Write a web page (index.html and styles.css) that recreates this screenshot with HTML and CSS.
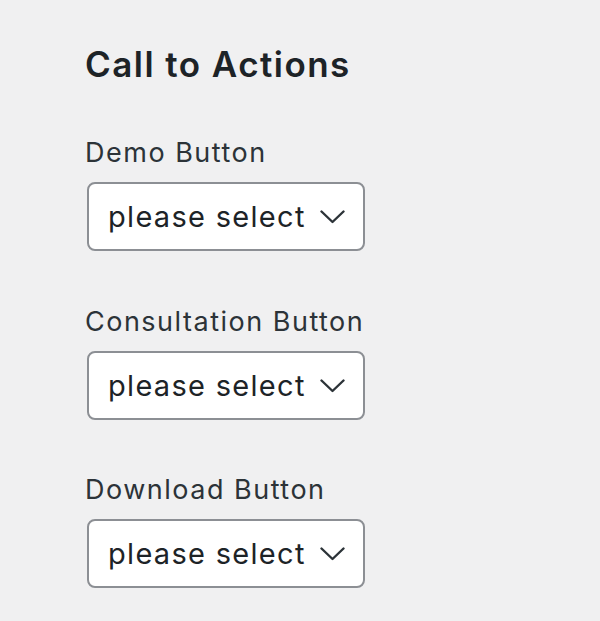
FILE: index.html
```html
<!DOCTYPE html>
<html>
<head>
<meta charset="utf-8">
<link rel="stylesheet" href="styles.css">
</head>
<body>
<div class="panel">
  <h2 class="title">Call to Actions</h2>
  <div class="field">
    <label class="label">Demo Button</label>
    <div class="select-wrap">
      <select class="select"><option>please select</option></select>
      <svg class="chev" width="25" height="14" viewBox="0 0 25 14"><path d="M1.5 1.5 L12.5 12 L23.5 1.5" fill="none" stroke="#2c3338" stroke-width="2.4" stroke-linecap="round" stroke-linejoin="round"/></svg>
    </div>
  </div>
  <div class="field">
    <label class="label">Consultation Button</label>
    <div class="select-wrap">
      <select class="select"><option>please select</option></select>
      <svg class="chev" width="25" height="14" viewBox="0 0 25 14"><path d="M1.5 1.5 L12.5 12 L23.5 1.5" fill="none" stroke="#2c3338" stroke-width="2.4" stroke-linecap="round" stroke-linejoin="round"/></svg>
    </div>
  </div>
  <div class="field">
    <label class="label">Download Button</label>
    <div class="select-wrap">
      <select class="select"><option>please select</option></select>
      <svg class="chev" width="25" height="14" viewBox="0 0 25 14"><path d="M1.5 1.5 L12.5 12 L23.5 1.5" fill="none" stroke="#2c3338" stroke-width="2.4" stroke-linecap="round" stroke-linejoin="round"/></svg>
    </div>
  </div>
</div>
</body>
</html>
```
FILE: styles.css
```css
html, body {
  margin: 0;
  padding: 0;
  background: #f0f0f1;
}
body {
  font-family: Inter, "Noto Sans", sans-serif;
  color: #1d2327;
}
.panel {
  padding: 41px 0 0 85px;
  display: flex;
  flex-direction: column;
}
.title {
  margin: 0 0 49px 0;
  font-size: 35px;
  font-weight: 600;
  line-height: 46px;
  color: #1d2327;
  letter-spacing: 1.45px;
}
.field {
  display: flex;
  flex-direction: column;
  margin-bottom: 53.5px;
}
.label {
  font-size: 27px;
  line-height: 34px;
  color: #2c3338;
  margin-bottom: 12px;
  letter-spacing: 1.5px;
}
.select-wrap {
  position: relative;
  width: 278px;
  height: 69px;
  margin-left: 2px;
}
.select {
  -webkit-appearance: none;
  appearance: none;
  box-sizing: border-box;
  width: 278px;
  height: 69px;
  border: 2px solid #8c8f94;
  border-radius: 8px;
  background: #fff;
  padding: 0 0 0 19px;
  font-family: Inter, "Noto Sans", sans-serif;
  font-size: 29px;
  color: #1d2327;
  letter-spacing: 1.3px;
  margin: 0;
}
.chev {
  position: absolute;
  right: 20px;
  top: 28px;
  pointer-events: none;
}
```
